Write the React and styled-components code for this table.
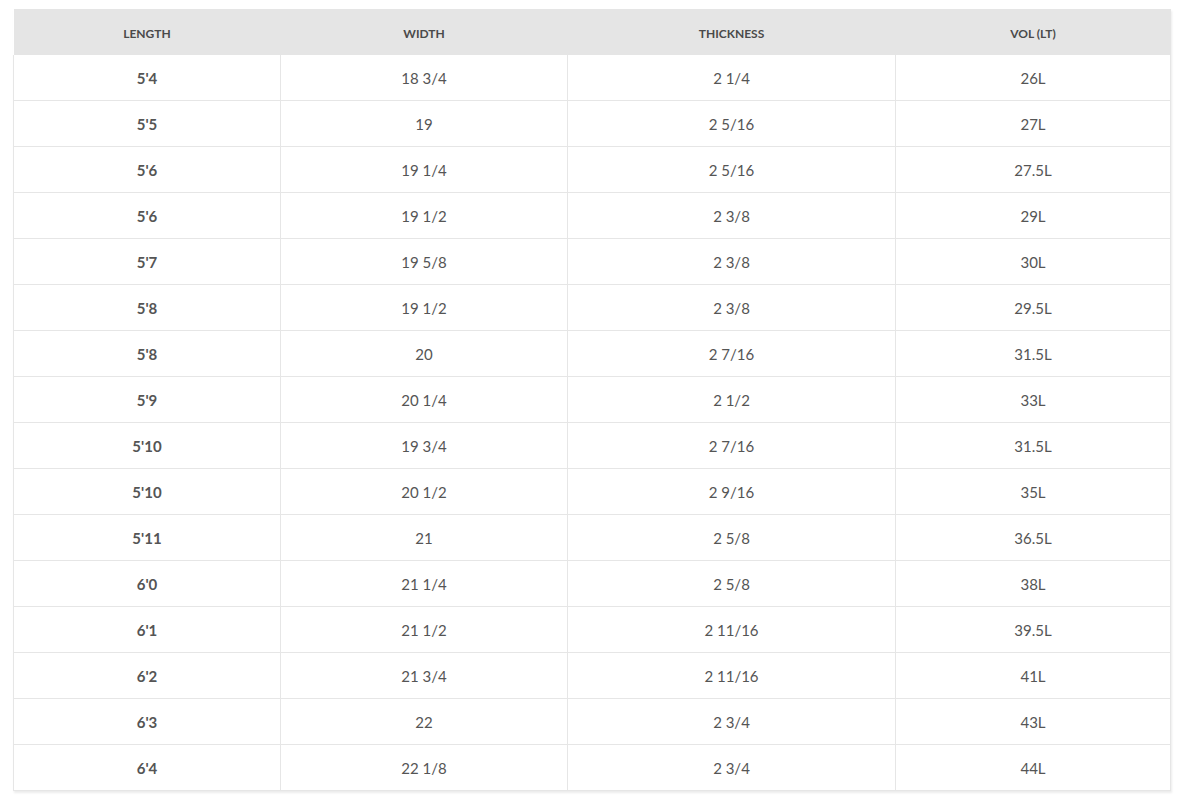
import React from 'react';
import styled, { createGlobalStyle } from 'styled-components';

const rows = [
  ["5'4", '18 3/4', '2 1/4', '26L'],
  ["5'5", '19', '2 5/16', '27L'],
  ["5'6", '19 1/4', '2 5/16', '27.5L'],
  ["5'6", '19 1/2', '2 3/8', '29L'],
  ["5'7", '19 5/8', '2 3/8', '30L'],
  ["5'8", '19 1/2', '2 3/8', '29.5L'],
  ["5'8", '20', '2 7/16', '31.5L'],
  ["5'9", '20 1/4', '2 1/2', '33L'],
  ["5'10", '19 3/4', '2 7/16', '31.5L'],
  ["5'10", '20 1/2', '2 9/16', '35L'],
  ["5'11", '21', '2 5/8', '36.5L'],
  ["6'0", '21 1/4', '2 5/8', '38L'],
  ["6'1", '21 1/2', '2 11/16', '39.5L'],
  ["6'2", '21 3/4', '2 11/16', '41L'],
  ["6'3", '22', '2 3/4', '43L'],
  ["6'4", '22 1/8', '2 3/4', '44L'],
];

const columns = [
  { label: 'LENGTH', width: 267 },
  { label: 'WIDTH', width: 287 },
  { label: 'THICKNESS', width: 328 },
  { label: 'VOL (LT)', width: 275 },
];

const GlobalStyle = createGlobalStyle`
  body {
    margin: 0;
    background: #fff;
    font-family: Lato, "Open Sans", sans-serif;
  }
`;

export default function App() {
  return (
    <Page>
      <GlobalStyle />
      <Table>
        <colgroup>
          {columns.map(c => <col key={c.label} style={{ width: c.width }} />)}
        </colgroup>
        <thead>
          <tr>
            {columns.map(c => <Th key={c.label}>{c.label}</Th>)}
          </tr>
        </thead>
        <tbody>
          {rows.map((row, i) => (
            <tr key={i}>
              {row.map((cell, j) => (
                <Td key={j} $first={j === 0}>{cell}</Td>
              ))}
            </tr>
          ))}
        </tbody>
      </Table>
    </Page>
  );
}

const Page = styled.div`
  padding: 9px 9px 9px 13px;
`;
const Table = styled.table`
  width: 1157px;
  border-collapse: collapse;
  table-layout: fixed;
  box-shadow: 1px 2px 2px rgba(0, 0, 0, 0.08);
`;
const Th = styled.th`
  height: 44px;
  padding: 2px 0 0;
  background: #e5e5e5;
  color: #4a4a4a;
  font-size: 12px;
  font-weight: 700;
  text-align: center;
  vertical-align: middle;
`;
const Td = styled.td`
  height: 45px;
  padding: 0;
  border: 1px solid #e6e6e6;
  border-top: none;
  color: #555;
  font-size: 15px;
  font-weight: ${props => props.$first ? 700 : 400};
  text-align: center;
  vertical-align: middle;
`;
